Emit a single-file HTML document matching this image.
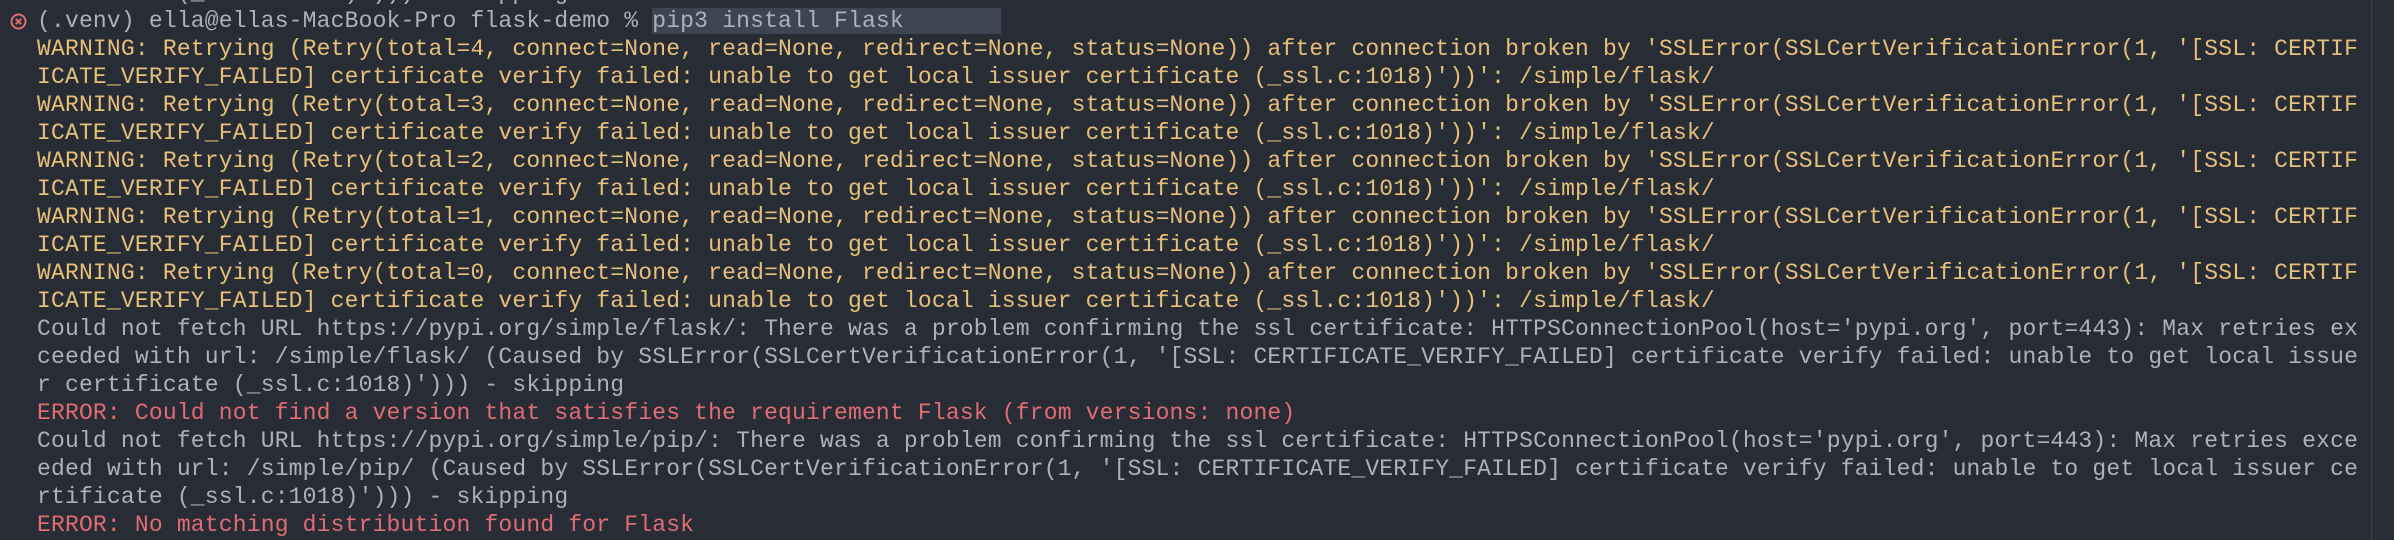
<!DOCTYPE html>
<html><head><meta charset="utf-8"><style>
html,body{margin:0;padding:0;background:#282c34;width:2394px;height:540px;overflow:hidden}
.t{position:absolute;left:37px;top:-21px;font-family:"Liberation Mono",monospace;font-size:23px;letter-spacing:0.18px;line-height:28px;white-space:pre;color:#abb2bf}
.y{color:#e5c07b}.r{color:#e06c75}
.hl{background:#3e4451;padding-right:97px}
.sb{position:absolute;left:2371px;top:0;width:1px;height:540px;background:#3a3f4a}
.ic{position:absolute;left:10px;top:13px}
</style></head><body>
<svg class="ic" width="17" height="17" viewBox="0 0 17 17"><circle cx="8.5" cy="8.5" r="7" fill="none" stroke="#e06c75" stroke-width="2"/><path d="M5.8 5.8L11.2 11.2M11.2 5.8L5.8 11.2" stroke="#e06c75" stroke-width="2"/></svg>
<div class="sb"></div>
<div class="t">rtificate (_ssl.c:1018)'))) - skipping
(.venv) ella@ellas-MacBook-Pro flask-demo % <span class="hl">pip3 install Flask</span>
<span class="y">WARNING: Retrying (Retry(total=4, connect=None, read=None, redirect=None, status=None)) after connection broken by 'SSLError(SSLCertVerificationError(1, '[SSL: CERTIF
ICATE_VERIFY_FAILED] certificate verify failed: unable to get local issuer certificate (_ssl.c:1018)'))': /simple/flask/
WARNING: Retrying (Retry(total=3, connect=None, read=None, redirect=None, status=None)) after connection broken by 'SSLError(SSLCertVerificationError(1, '[SSL: CERTIF
ICATE_VERIFY_FAILED] certificate verify failed: unable to get local issuer certificate (_ssl.c:1018)'))': /simple/flask/
WARNING: Retrying (Retry(total=2, connect=None, read=None, redirect=None, status=None)) after connection broken by 'SSLError(SSLCertVerificationError(1, '[SSL: CERTIF
ICATE_VERIFY_FAILED] certificate verify failed: unable to get local issuer certificate (_ssl.c:1018)'))': /simple/flask/
WARNING: Retrying (Retry(total=1, connect=None, read=None, redirect=None, status=None)) after connection broken by 'SSLError(SSLCertVerificationError(1, '[SSL: CERTIF
ICATE_VERIFY_FAILED] certificate verify failed: unable to get local issuer certificate (_ssl.c:1018)'))': /simple/flask/
WARNING: Retrying (Retry(total=0, connect=None, read=None, redirect=None, status=None)) after connection broken by 'SSLError(SSLCertVerificationError(1, '[SSL: CERTIF
ICATE_VERIFY_FAILED] certificate verify failed: unable to get local issuer certificate (_ssl.c:1018)'))': /simple/flask/</span>
Could not fetch URL https://pypi.org/simple/flask/: There was a problem confirming the ssl certificate: HTTPSConnectionPool(host='pypi.org', port=443): Max retries ex
ceeded with url: /simple/flask/ (Caused by SSLError(SSLCertVerificationError(1, '[SSL: CERTIFICATE_VERIFY_FAILED] certificate verify failed: unable to get local issue
r certificate (_ssl.c:1018)'))) - skipping
<span class="r">ERROR: Could not find a version that satisfies the requirement Flask (from versions: none)</span>
Could not fetch URL https://pypi.org/simple/pip/: There was a problem confirming the ssl certificate: HTTPSConnectionPool(host='pypi.org', port=443): Max retries exce
eded with url: /simple/pip/ (Caused by SSLError(SSLCertVerificationError(1, '[SSL: CERTIFICATE_VERIFY_FAILED] certificate verify failed: unable to get local issuer ce
rtificate (_ssl.c:1018)'))) - skipping
<span class="r">ERROR: No matching distribution found for Flask</span></div>
</body></html>
